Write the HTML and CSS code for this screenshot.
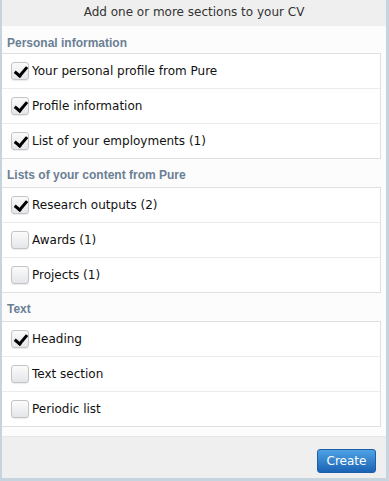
FILE: index.html
```html
<!DOCTYPE html>
<html lang="en">
<head>
  <meta charset="UTF-8" />
  <title>Add sections to your CV</title>
  <link rel="stylesheet" href="styles.css">
</head>
<body>

  <div class="dialog">
    <div class="dialog-header">Add one or more sections to your CV</div>

    <div class="dialog-body">
      <div class="group">
        <h3>Personal information</h3>
        <ul class="options">
          <li><span class="check on"></span>Your personal profile from Pure</li>
          <li><span class="check on"></span>Profile information</li>
          <li><span class="check on"></span>List of your employments (1)</li>
        </ul>
      </div>

      <div class="group">
        <h3>Lists of your content from Pure</h3>
        <ul class="options">
          <li><span class="check on"></span>Research outputs (2)</li>
          <li><span class="check"></span>Awards (1)</li>
          <li><span class="check"></span>Projects (1)</li>
        </ul>
      </div>

      <div class="group">
        <h3>Text</h3>
        <ul class="options">
          <li><span class="check on"></span>Heading</li>
          <li><span class="check"></span>Text section</li>
          <li><span class="check"></span>Periodic list</li>
        </ul>
      </div>
    </div>

    <div class="dialog-footer">
      <button class="create-button">Create</button>
    </div>
  </div>

</body>
</html>
```

FILE: styles.css
```css
body {
  margin: 0;
  font-family: 'DejaVu Sans', sans-serif;
  font-size: 12px;
  color: #111;
}

.dialog {
  width: 389px;
  height: 481px;
  box-sizing: border-box;
  border: 2px solid #c6d4df;
  border-top: none;
  border-right-width: 3px;
  border-bottom-width: 3px;
  display: flex;
  flex-direction: column;
  background-color: #fcfcfc;
}

.dialog-header {
  height: 26px;
  line-height: 25px;
  text-align: center;
  background-color: #efefef;
  color: #333;
  font-size: 12px;
}

.dialog-body {
  flex: 1;
  padding-right: 5px;
}

.group h3 {
  margin: 0;
  height: 28px;
  line-height: 32px;
  padding-left: 5px;
  font-family: 'Liberation Sans', sans-serif;
  font-size: 12px;
  font-weight: bold;
  color: #6b7f94;
}

.group:first-child h3 {
  height: 27px;
  line-height: 34px;
}

.options {
  list-style: none;
  margin: 0;
  padding: 0;
  background-color: #fff;
  border: 1px solid #e0e0e0;
  border-left: none;
}

.options li {
  height: 34px;
  display: flex;
  align-items: center;
  padding-left: 9px;
  border-top: 1px solid #ebebeb;
}

.options li:first-child {
  border-top: none;
}

.check {
  width: 16px;
  height: 16px;
  margin-right: 3px;
  border: 1px solid #c4c4c4;
  border-radius: 3px;
  background: linear-gradient(#fbfbfb, #e4e6ea);
  box-shadow: 0 1px 1px rgba(0,0,0,0.08);
  position: relative;
}

.check.on::after {
  content: "";
  position: absolute;
  left: 5px;
  top: 1px;
  width: 5px;
  height: 10px;
  border: solid #000;
  border-width: 0 3px 3px 0;
  transform: rotate(40deg);
}

.dialog-footer {
  height: 42px;
  background-color: #efefef;
  border-top: 1px solid #e8e8e8;
  display: flex;
  justify-content: flex-end;
  align-items: flex-start;
  padding: 12px 10px 0 0;
  box-sizing: border-box;
}

.create-button {
  width: 59px;
  height: 24px;
  border: 1px solid #1d5ea6;
  border-radius: 3px;
  background: linear-gradient(#4ea3e4, #1b63b5);
  color: #fff;
  font-family: 'DejaVu Sans', sans-serif;
  font-size: 12px;
  cursor: pointer;
}
```
